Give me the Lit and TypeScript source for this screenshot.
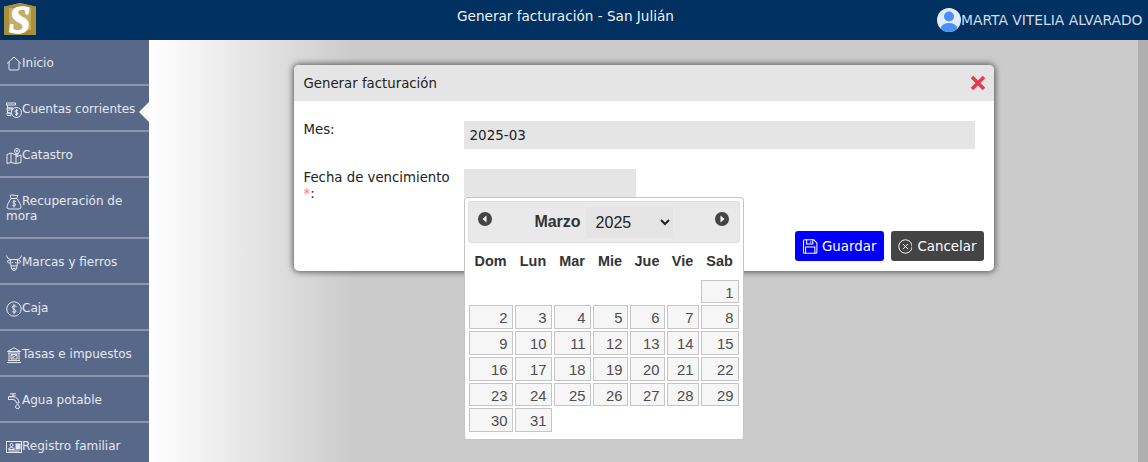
import { LitElement, html, css, svg } from "lit";
import { customElement } from "lit/decorators.js";

const ic = (body: unknown) => html`<svg class="ic" viewBox="0 0 16 16" fill="none" stroke="currentColor" stroke-width="1">${body}</svg>`;

const icons = {
  home: svg`<path d="M1 7.500 8 1l7 6.500"/><path d="M3 6v7q0 1 1 1h8q1 0 1-1V6"/>`,
  coins: svg`<path d="M.5 1h9v2h-9zM1.500 3v3h6M1 6h5v2H1zM1.500 8v3h3M1 11h4v2.500H1z"/><circle cx="10.500" cy="10.500" r="5"/><path d="M12 8.800q-1.500-1-2.800 0t1.300 1.700 1.300 1.700-2.800 0M10.500 7v7"/>`,
  map: svg`<path d="M1 6.500 5 5v9.500L1 15.500zM5 5l5 2v8.500l-5-1M10 9l5-2v7.500l-5 1"/><circle cx="11" cy="3" r="2.500"/><circle cx="11" cy="3" r=".8"/><path d="M9.500 5 11 8l1.500-3"/>`,
  bag: svg`<path d="M5 4.500 4 1.500Q6 .5 8 1.200t4 .3L10.500 4.500M5 4.500h6M5 4.500C3 8 1 11 1 13q0 2 2 2h10q2 0 2-2C15 11 13 8 11 4.500"/><path d="M10 7.500q-1.800-1-2.800 0t1 1.800 1.200 2-3 0M8 6v7.500"/>`,
  bull: svg`<path d="M.5 .5q.5 3.500 4 4h7q3.500-.5 4-4M4.500 4.500 1 6.500q1.500 2 3.500 1.500M11.500 4.500 15 6.500q-1.500 2-3.500 1.500M4.500 4.500 5 11.500q.5 4 3 4t3-4l.5-7"/><path d="M5 11h6M6 7.500h1M9 7.500h1M6.500 13.500h3"/>`,
  cash: svg`<circle cx="8" cy="8" r="7.200"/><path d="M10.500 5.500q-2-1.500-3.800-.3t1 2.800 2.300 2.700-3.800 0M8 3v10"/>`,
  bank: svg`<path d="M1.500 4.500 8 .8l6.500 3.700zM2 6h12M3 13V6M13 13V6M2 13.500h12M1 15.500h14M5 7.500h6v4.500H5zM5 12l6-4.500M5.500 8l2 2"/>`,
  tap: svg`<path d="M4 .8h6M7 .8v3M2.500 3.800l7-1M2.500 6.500H7q3 0 3.500 3.500h2.500Q12.500 4 7 3.800H2.500z"/><path d="M11.500 11q-2 2-2 3a2 1.600 0 0 0 4 0q0-1-2-3z"/>`,
  card: svg`<rect x=".5" y="2.500" width="15" height="11"/><rect x="10" y="5" width="4" height="5" fill="currentColor"/><circle cx="5.500" cy="6" r="1.500"/><path d="M2.500 10.500q0-2 3-2t3 2zM2.500 12h11"/>`,
};

const menu: [keyof typeof icons, string][] = [
  ["home", "Inicio"],
  ["coins", "Cuentas corrientes"],
  ["map", "Catastro"],
  ["bag", "Recuperación de mora"],
  ["bull", "Marcas y fierros"],
  ["cash", "Caja"],
  ["bank", "Tasas e impuestos"],
  ["tap", "Agua potable"],
  ["card", "Registro familiar"],
];

const dayNames = ["Dom", "Lun", "Mar", "Mie", "Jue", "Vie", "Sab"];

@customElement("app-root")
export class AppRoot extends LitElement {
  static styles = css`
    :host { display: block; width: 1148px; height: 462px; overflow: hidden; font-family: "DejaVu Sans", sans-serif; font-size: 13.3px; background: #fff; }
    .top { height: 40px; background: #003160; display: flex; align-items: center; color: #fff; }
    .logo-cell { width: 194px; height: 40px; padding-left: 4px; box-sizing: border-box; }
    .logo { position: relative; isolation: isolate; width: 32px; height: 40px; display: flex; align-items: center; justify-content: center; color: #fff; font: italic 700 35px/40px "Liberation Serif", serif; -webkit-text-stroke: 1.2px #fff; }
    .logo::before { content: ""; position: absolute; left: 0; right: 0; top: 3px; height: 32px; z-index: -1; background: #c2ad69; box-shadow: inset 0 0 0 5px #a88f3c; clip-path: polygon(0 12%, 50% 0, 100% 12%, 100% 100%, 0 100%); }
    .logo span { display: block; transform: scale(1.1, 1.15); }
    .title { flex: 1; text-align: center; font-size: 13.6px; color: #f0f3f8; padding-bottom: 8px; }
    .user { width: 211px; display: flex; align-items: center; color: #d3dbe6; font-size: 13.85px; white-space: nowrap; }
    .avatar { width: 24px; height: 24px; flex: none; }
    .body { display: flex; height: 422px; }
    .side { width: 149px; flex: none; background: #586889; color: #e4e8f0; overflow: hidden; font-size: 12px; }
    .item { position: relative; border-bottom: 2px solid #8c98b2; padding: 16px 4px 13px 6px; line-height: 15px; }
    .ic { width: 16px; height: 16px; vertical-align: -1px; margin: -4px 0; }
    .item.on::after { content: ""; position: absolute; right: 0; top: 16px; border: 10px solid transparent; border-right-color: #fafafa; border-left-width: 0; }
    .main { flex: 1; display: flex; background: linear-gradient(90deg, #fff 0, #cbcbcb 205px); }
    .stage { flex: 1; display: flex; justify-content: center; align-items: flex-start; padding-top: 25px; }
    .strip { width: 10px; background: #aeaeae; }
    .modal { width: 700px; background: #fff; border-radius: 5px; box-shadow: 0 0 6px 1px rgba(0,0,0,.6); color: #222; }
    .mhead { height: 36px; background: #e5e5e5; border-radius: 5px 5px 0 0; display: flex; align-items: center; justify-content: space-between; padding: 0 7px 0 10px; }
    .x { width: 18px; height: 18px; }
    .form { padding: 20px 19px 0 10px; display: grid; grid-template-columns: 160px 1fr; row-gap: 20px; line-height: 16px; }
    .lab { padding: 1px 8px 0 0; }
    .field { height: 28px; background: #e5e5e5; padding: 0 6px; display: flex; align-items: center; box-sizing: border-box; font-size: 13.5px; }
    .date { position: relative; }
    .date .field { width: 172px; }
    .req { color: #f77; }
    .foot { display: flex; justify-content: flex-end; gap: 7px; padding: 29px 10px 10px; }
    .btn { height: 30px; border-radius: 3px; color: #fff; display: flex; align-items: center; gap: 4px; padding: 0 7px; box-sizing: border-box; font-size: 13.4px; }
    .btn svg { width: 17px; height: 17px; }
    .save { background: #0000fa; width: 89px; }
    .cancel { background: #444; width: 93px; gap: 5px; }
    .cal { position: absolute; left: 0; top: 28px; width: 280px; height: 243px; box-sizing: border-box; background: #fff; border: 1px solid #c5c5c5; border-radius: 3px; padding: 3px; font-family: "Liberation Sans", sans-serif; color: #333; }
    .chead { height: 42px; background: #e9e9e9; border-radius: 3px; display: flex; align-items: center; position: relative; justify-content: center; gap: 5px; font-weight: 700; font-size: 16px; border: 1px solid #ddd; box-sizing: border-box; }
    .nav { position: absolute; top: 10px; width: 14px; height: 14px; }
    .prev { left: 9px; }
    .next { right: 10px; }
    select { width: 87px; height: 31px; border: none; background: #e4e4e4; font: 16px "Liberation Sans", sans-serif; color: #222; padding-left: 6px; margin: 0; }
    .grid { display: grid; grid-template-columns: 44px 37px 37px 35px 35px 32px 38px; column-gap: 2px; margin-left: 1px; }
    .dow { display: grid; grid-template-columns: inherit; column-gap: 2px; grid-column: 1 / -1; height: 37px; padding-bottom: 2px; box-sizing: border-box; align-items: center; text-align: center; font-weight: 700; font-size: 14.4px; }
    .days { display: grid; grid-template-columns: inherit; column-gap: 2px; row-gap: 2px; grid-column: 1 / -1; grid-template-rows: 23px 24px 24px 24px 23px 24px; }
    .d { border: 1px solid #c5c5c5; background: #f6f6f6; color: #4d4d4d; text-align: right; padding-right: 4px; font-size: 14.8px; line-height: 24px; box-sizing: border-box; overflow: hidden; }
  `;

  render() {
    const cells: unknown[] = [];
    for (let i = 0; i < 6; i++) cells.push(html`<span></span>`);
    for (let d = 1; d <= 31; d++) cells.push(html`<span class="d">${d}</span>`);
    return html`
      <div class="top">
        <div class="logo-cell"><div class="logo"><span>S</span></div></div>
        <div class="title">Generar facturación - San Julián</div>
        <div class="user">
          <svg class="avatar" viewBox="0 0 24 24"><circle cx="12" cy="12" r="12" fill="#e2eaff"/><circle cx="12" cy="8.500" r="5" fill="#4a90f0"/><path d="M3.500 20.500Q5 15 12 15t8.500 5.500A12 12 0 0 1 3.500 20.500z" fill="#4a90f0"/></svg>MARTA VITELIA ALVARADO
        </div>
      </div>
      <div class="body">
        <nav class="side">
          ${menu.map(([k, t], i) => html`<div class="item ${i === 1 ? "on" : ""}">${ic(icons[k])}${t}</div>`)}
        </nav>
        <div class="main">
          <div class="stage">
            <div class="modal">
              <div class="mhead">
                <span>Generar facturación</span>
                <svg class="x" viewBox="0 0 18 18"><path d="M3 3 15 15M15 3 3 15" stroke="#e63a4c" stroke-width="3.500"/></svg>
              </div>
              <div class="form">
                <div class="lab">Mes:</div>
                <div class="field">2025-03</div>
                <div class="lab">Fecha de vencimiento <span class="req">*</span>:</div>
                <div class="date">
                  <div class="field"></div>
                  <div class="cal">
                    <div class="chead">
                      <svg class="nav prev" viewBox="0 0 14 14"><circle cx="7" cy="7" r="7" fill="#444"/><path d="M8.500 3.500v7L4.500 7z" fill="#fff"/></svg>
                      <span>Marzo</span>
                      <select><option>2025</option></select>
                      <svg class="nav next" viewBox="0 0 14 14"><circle cx="7" cy="7" r="7" fill="#444"/><path d="M5.500 3.500v7L9.500 7z" fill="#fff"/></svg>
                    </div>
                    <div class="grid">
                      <div class="dow">${dayNames.map((n) => html`<span>${n}</span>`)}</div>
                      <div class="days">${cells}</div>
                    </div>
                  </div>
                </div>
              </div>
              <div class="foot">
                <div class="btn save">
                  <svg viewBox="0 0 16 16" fill="none" stroke="#fff" stroke-width="1"><path d="M1.500 2.500q0-1 1-1h9l3 3v9q0 1-1 1h-11q-1 0-1-1z"/><path d="M4.500 1.500v4h6v-4M8.500 2.800v1.500M3.500 14.500v-6h9v6"/></svg>
                  Guardar
                </div>
                <div class="btn cancel">
                  <svg viewBox="0 0 16 16" fill="none" stroke="#fff" stroke-width="1"><circle cx="8" cy="8" r="7.200"/><path d="M5.300 5.300l5.400 5.400M10.700 5.300l-5.400 5.400"/></svg>
                  Cancelar
                </div>
              </div>
            </div>
          </div>
          <div class="strip"></div>
        </div>
      </div>
    `;
  }
}
